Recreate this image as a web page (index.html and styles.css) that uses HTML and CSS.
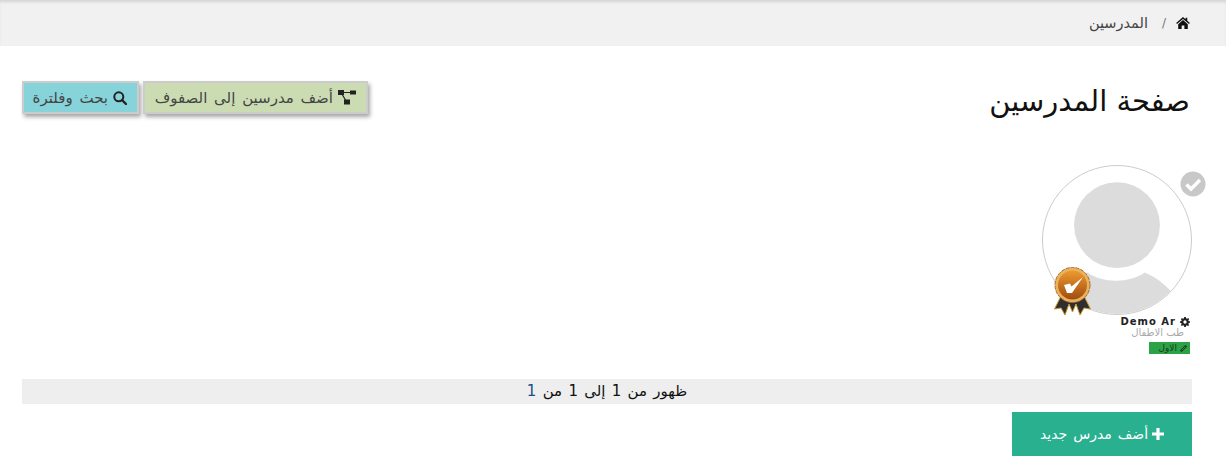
FILE: index.html
```html
<!DOCTYPE html>
<html lang="ar" dir="rtl">
<head>
  <meta charset="UTF-8">
  <title>صفحة المدرسين</title>
  <link rel="stylesheet" href="styles.css">
</head>
<body>
  <nav class="breadcrumb">
    <svg class="home-icon" viewBox="0 0 16 14"><path d="M8 0 L11 2.6 V1 H13 V4.4 L16 7 L15 8.2 L8 2.2 L1 8.2 L0 7 Z M8 3.6 L13.6 8.4 V14 H9.6 V10 H6.4 V14 H2.4 V8.4 Z"/></svg>
    <span class="crumb-sep">/</span>
    <span class="crumb">المدرسين</span>
  </nav>

  <main class="content">
    <header class="page-head">
      <h1>صفحة المدرسين</h1>
      <div class="actions">
        <button class="btn btn-green">
          <svg class="btn-icon" viewBox="0 0 18 15">
            <path d="M3 2.5 H15 M3 2.5 L9 12.5" stroke="#222" stroke-width="1.2"/>
            <rect x="0" y="0" width="6" height="5"/>
            <rect x="12" y="0.5" width="6" height="4"/>
            <rect x="6" y="9.5" width="6" height="5"/>
          </svg>
          أضف مدرسين إلى الصفوف
        </button>
        <button class="btn btn-blue">
          <svg class="btn-icon search" viewBox="0 0 14 14"><circle cx="5.8" cy="5.8" r="4.5" fill="none" stroke="#222" stroke-width="2"/><path d="M9 9 L13 13" stroke="#222" stroke-width="2.4" stroke-linecap="round"/></svg>
          بحث وفلترة
        </button>
      </div>
    </header>

    <section class="teachers">
      <article class="teacher">
        <div class="avatar-wrap">
          <div class="avatar">
            <svg viewBox="0 0 150 150">
              <circle cx="75" cy="60" r="43.5" fill="#dcdcdc"/>
              <path d="M20 150 V125 C25 115 35 110 45 108 C60 119 88 119 103 108 C115 113 122 119 130 127 L140 150 Z" fill="#dcdcdc"/>
            </svg>
          </div>
          <svg class="check-badge" viewBox="0 0 26 26"><circle cx="13" cy="13" r="12.5" fill="#c8c8c8"/><path d="M6.5 13.5 L11 18 L20 9" fill="none" stroke="#fff" stroke-width="3.4"/></svg>
          <svg class="medal" viewBox="0 0 37 48">
            <defs>
              <linearGradient id="medalFill" x1="0" y1="0" x2="0" y2="1">
                <stop offset="0" stop-color="#ee9a30"/>
                <stop offset="1" stop-color="#a04c0e"/>
              </linearGradient>
            </defs>
            <path d="M8 27 L0.5 42 L7 41 L11 48 L15 37 L18.5 45 L22 37 L26 48 L30 41 L36.5 42 L29 27 Z" fill="#2e2e2e" stroke="#c9962f" stroke-width="1"/>
            <circle cx="18.5" cy="18" r="17.5" fill="#e9b25f" stroke="#a8682a" stroke-width="1" stroke-dasharray="4 1"/>
            <circle cx="18.5" cy="18" r="14.5" fill="url(#medalFill)"/>
            <path d="M10 18 L16 16.5 L17.5 19.5 L29 10 L18 26 L13 26 Z" fill="#fff"/>
          </svg>
        </div>
        <div class="teacher-name">
          <svg class="gear" viewBox="0 0 12 12"><path fill-rule="evenodd" d="M5 0 H7 L7.3 1.6 L8.6 2.1 L10 1.2 L11 2.6 L10 3.8 L10.5 5 L12 5.2 V7 L10.5 7.2 L10 8.4 L10.9 9.7 L9.6 11 L8.4 10 L7.2 10.5 L7 12 H5 L4.8 10.5 L3.6 10 L2.3 10.9 L1 9.6 L2 8.4 L1.5 7.2 L0 7 V5.2 L1.5 5 L2 3.8 L1.1 2.6 L2.4 1.2 L3.6 2.1 L4.8 1.6 Z M6 4 A2 2 0 1 0 6 8 A2 2 0 1 0 6 4 Z"/></svg>
          <bdi>Demo Ar</bdi>
        </div>
        <div class="teacher-spec">طب الاطفال</div>
        <div class="teacher-tag">
          <svg class="link-icon" viewBox="0 0 10 10"><path d="M2 8 L8 2" stroke="#1c3c20" stroke-width="3.4" stroke-linecap="round"/><path d="M3 7 L7 3" stroke="#2ba246" stroke-width="1.2" stroke-linecap="round"/></svg>
          الاول
        </div>
      </article>
    </section>

    <div class="pager-info">ظهور من <span>1</span> إلى <span>1</span> من <span class="total">1</span></div>

    <div class="footer-actions">
      <button class="btn-add">
        <svg class="plus" viewBox="0 0 12 12"><path d="M4.4 0 H7.6 V4.4 H12 V7.6 H7.6 V12 H4.4 V7.6 H0 V4.4 H4.4 Z"/></svg>
        أضف مدرس جديد
      </button>
    </div>
  </main>
</body>
</html>
```

FILE: styles.css
```css
* {
  box-sizing: border-box;
}
body {
  margin: 0;
  font-family: "DejaVu Sans", sans-serif;
  background-color: #fff;
  color: #222;
  overflow: hidden;
}
.breadcrumb {
  height: 46px;
  background-color: #f1f1f1;
  box-shadow: inset 0 3px 3px -1px rgba(0, 0, 0, 0.12);
  display: flex;
  align-items: center;
  padding-right: 36px;
  font-size: 14.5px;
  color: #444;
}
.home-icon {
  width: 14px;
  height: 12px;
  fill: #111;
}
.crumb-sep {
  margin: 0 10px 0 14px;
  color: #777;
  font-size: 12px;
}
.content {
  padding-right: 34px;
  padding-left: 22px;
}
.page-head {
  display: flex;
  justify-content: space-between;
  align-items: flex-start;
  padding-top: 35px;
  padding-right: 2px;
}
h1 {
  margin: 0;
  font-size: 29px;
  font-weight: normal;
  line-height: 40px;
  color: #111;
}
.actions {
  display: flex;
  gap: 4px;
  direction: ltr;
  flex-direction: row-reverse;
}
.btn {
  direction: rtl;
  height: 33px;
  border: 2px solid #ccc;
  box-shadow: 2px 3px 4px rgba(0, 0, 0, 0.35);
  font-family: "DejaVu Sans", sans-serif;
  font-size: 15px;
  word-spacing: 2px;
  color: #444;
  padding: 0 10px;
  display: flex;
  align-items: center;
  gap: 5px;
  white-space: nowrap;
}
.btn-green {
  background-color: #cbdcb3;
  width: 225px;
}
.btn-blue {
  background-color: #86d3da;
  width: 117px;
  order: 1;
}
.btn-icon {
  width: 18px;
  height: 15px;
  fill: #222;
  flex-shrink: 0;
}
.btn-icon.search {
  width: 14px;
  height: 14px;
}
.teachers {
  display: flex;
  margin-top: 44px;
}
.teacher {
  width: 150px;
  font-size: 9px;
}
.avatar-wrap {
  position: relative;
  width: 150px;
  height: 150px;
}
.avatar {
  width: 150px;
  height: 150px;
  border: 1px solid #ccc;
  border-radius: 50%;
  overflow: hidden;
  background-color: #fff;
}
.avatar svg {
  width: 100%;
  height: 100%;
  display: block;
}
.check-badge {
  position: absolute;
  top: 6px;
  right: -14px;
  width: 26px;
  height: 26px;
}
.medal {
  position: absolute;
  left: 12px;
  top: 102px;
  width: 37px;
  height: 48px;
}
.teacher-name {
  display: flex;
  align-items: center;
  gap: 4px;
  margin-right: 2px;
  font-size: 10px;
  font-weight: bold;
  letter-spacing: 1px;
  color: #222;
  line-height: 13px;
}
.gear {
  width: 10px;
  height: 10px;
  fill: #222;
}
.teacher-spec {
  color: #aaa;
  font-size: 10px;
  line-height: 10px;
  margin-right: 8px;
}
.teacher-tag {
  display: flex;
  align-items: center;
  gap: 3px;
  width: 41px;
  height: 12px;
  margin-top: 4px;
  margin-right: 2px;
  padding: 0 3px;
  background-color: #2ba246;
  color: #1c3c20;
  font-size: 9px;
}
.link-icon {
  width: 7px;
  height: 7px;
}
.pager-info {
  margin-top: 25px;
  height: 25px;
  background-color: #eee;
  text-align: center;
  font-size: 15px;
  word-spacing: 1.5px;
  line-height: 25px;
  color: #111;
}
.total {
  color: #1a4f8a;
}
.footer-actions {
  display: flex;
  margin-top: 8px;
}
.btn-add {
  width: 180px;
  height: 44px;
  border: none;
  background-color: #28b08f;
  color: #fff;
  font-family: "DejaVu Sans", sans-serif;
  font-size: 14px;
  word-spacing: 1.5px;
  display: flex;
  align-items: center;
  justify-content: center;
  gap: 4px;
}
.plus {
  width: 12px;
  height: 12px;
  fill: #fff;
}
```
